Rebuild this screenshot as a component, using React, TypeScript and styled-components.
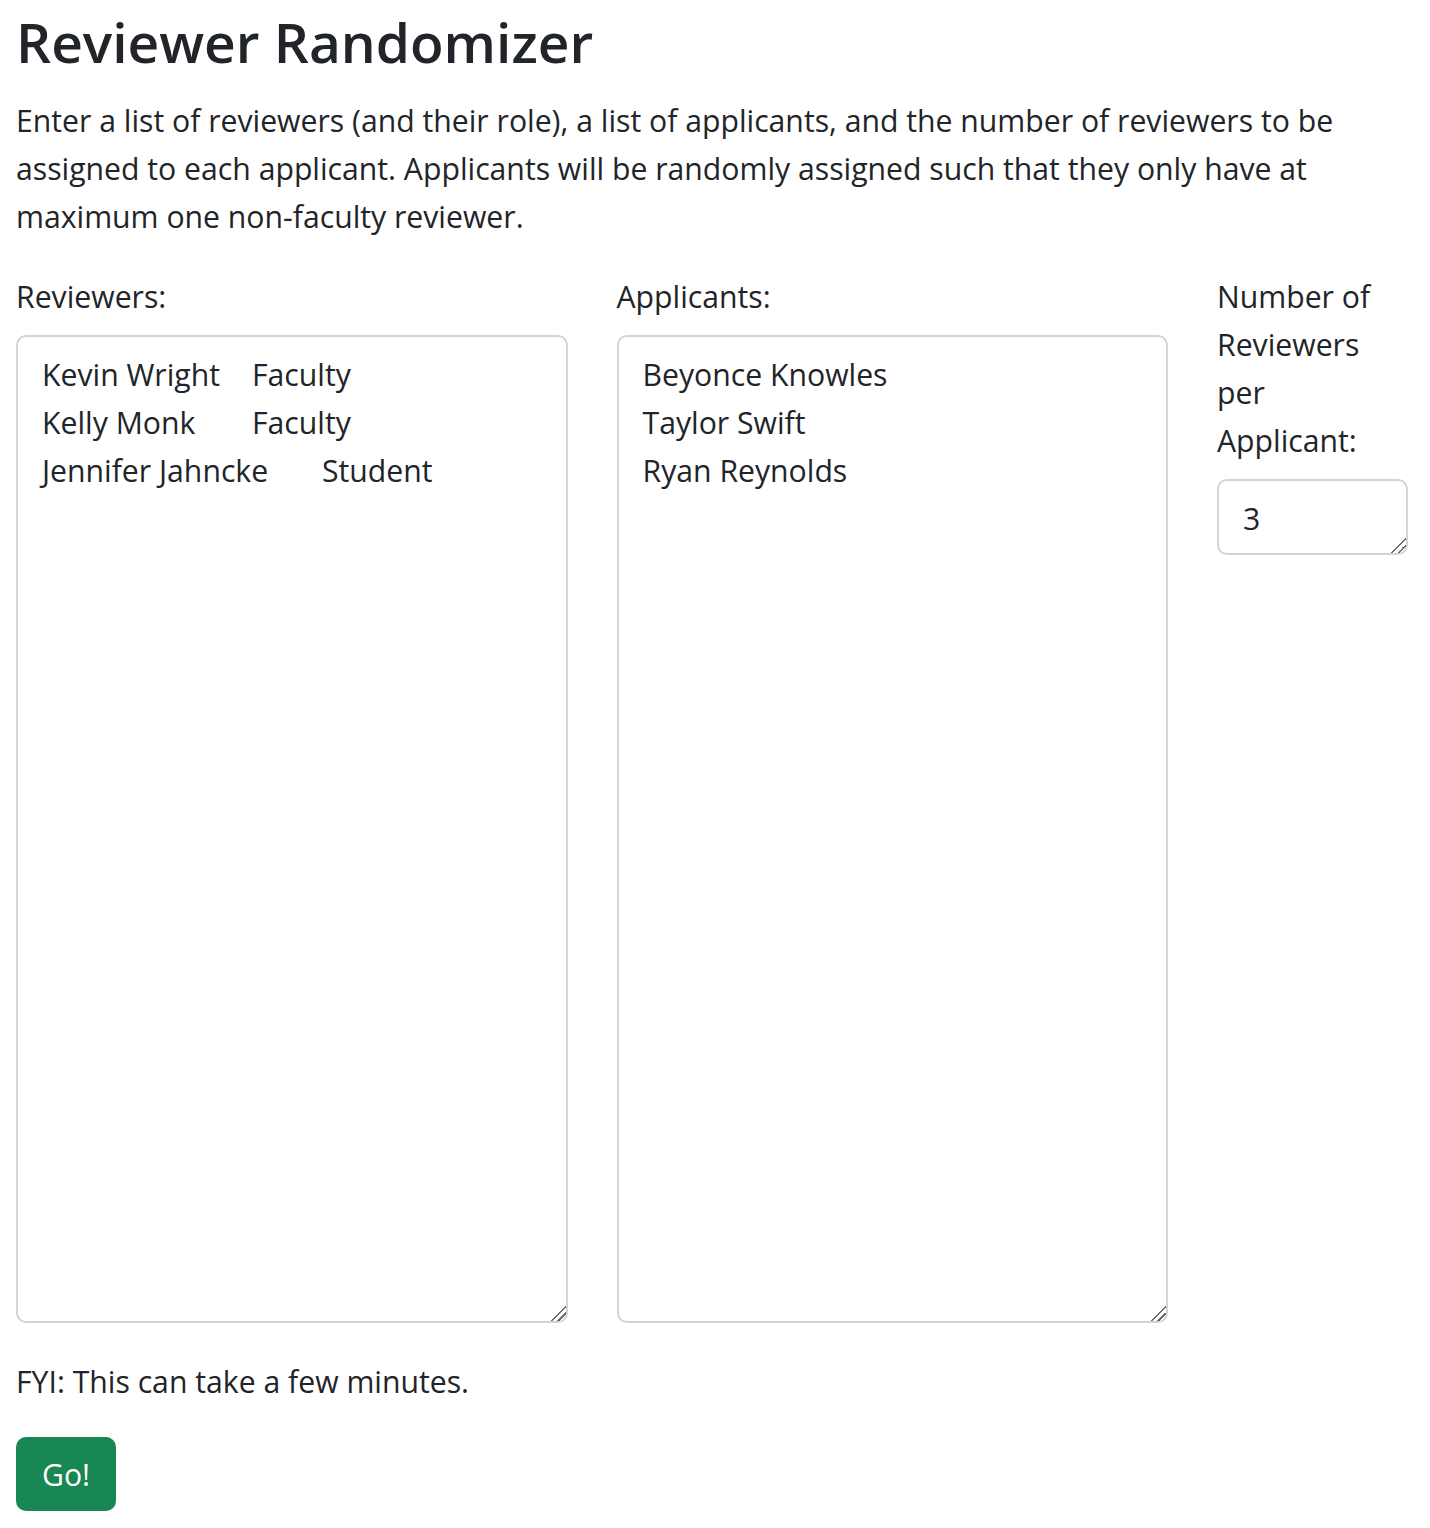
import styled, { createGlobalStyle } from "styled-components";

const GlobalStyle = createGlobalStyle`
    *, *::before, *::after {
        box-sizing: border-box;
    }
    body {
        margin: 0;
        background: #fff;
        color: #212529;
        font-family: "Open Sans", "Noto Sans", sans-serif;
        font-size: 30.2px;
        line-height: 48px;
    }
`;

const Page = styled.div`
    padding: 3px 22px 0 16px;
`;

const Title = styled.h1`
    margin: 0 0 16px;
    font-size: 55px;
    font-weight: 600;
    line-height: 78px;
`;

const Lead = styled.p`
    margin: 0 0 32px;
`;

const Fields = styled.div`
    display: grid;
    grid-template-columns: 1fr 1fr 191px;
    column-gap: 49px;
    margin-bottom: 35px;
`;

const Field = styled.div`
    display: flex;
    flex-direction: column;
`;

const Label = styled.label<{ $narrow?: boolean }>`
    display: block;
    max-width: ${(p) => (p.$narrow ? "180px" : "none")};
    margin-bottom: 14px;
`;

const TextBox = styled.textarea<{ $rows: number }>`
    display: block;
    width: 100%;
    height: ${(p) => p.$rows * 48 + 28}px;
    padding: 14px 24px 10px;
    border: 2px solid #ced4da;
    border-radius: 10px;
    font-family: inherit;
    font-size: inherit;
    line-height: 48px;
    color: #212529;
    background: #fff;
    tab-size: 70px;
    resize: vertical;
    &:focus {
        outline: none;
    }
    &::-webkit-resizer {
        background: linear-gradient(
            135deg,
            transparent 0 48%,
            #6c6c6c 48% 56%,
            transparent 56% 70%,
            #6c6c6c 70% 78%,
            transparent 78%
        );
    }
`;

const Note = styled.p`
    margin: 0 0 31px;
`;

const GoButton = styled.button`
    display: block;
    padding: 12px 24px 10px;
    border: 2px solid #198754;
    border-radius: 10px;
    background-color: #198754;
    color: #fff;
    font-family: inherit;
    font-size: inherit;
    line-height: 48px;
    cursor: pointer;
`;

const reviewers = "Kevin Wright\tFaculty\nKelly Monk\tFaculty\nJennifer Jahncke\tStudent";
const applicants = "Beyonce Knowles\nTaylor Swift\nRyan Reynolds";

export default function App() {
    return <Page>
        <GlobalStyle />
        <Title>Reviewer Randomizer</Title>
        <Lead>
            Enter a list of reviewers (and their role), a list of applicants, and the number of reviewers to be
            assigned to each applicant. Applicants will be randomly assigned such that they only have at
            maximum one non-faculty reviewer.
        </Lead>
        <Fields>
            <Field>
                <Label htmlFor="reviewers">Reviewers:</Label>
                <TextBox id="reviewers" $rows={20} defaultValue={reviewers} />
            </Field>
            <Field>
                <Label htmlFor="applicants">Applicants:</Label>
                <TextBox id="applicants" $rows={20} defaultValue={applicants} />
            </Field>
            <Field>
                <Label htmlFor="count" $narrow>Number of Reviewers per Applicant:</Label>
                <TextBox id="count" $rows={1} defaultValue="3" />
            </Field>
        </Fields>
        <Note>FYI: This can take a few minutes.</Note>
        <GoButton type="button">Go!</GoButton>
    </Page>
}
